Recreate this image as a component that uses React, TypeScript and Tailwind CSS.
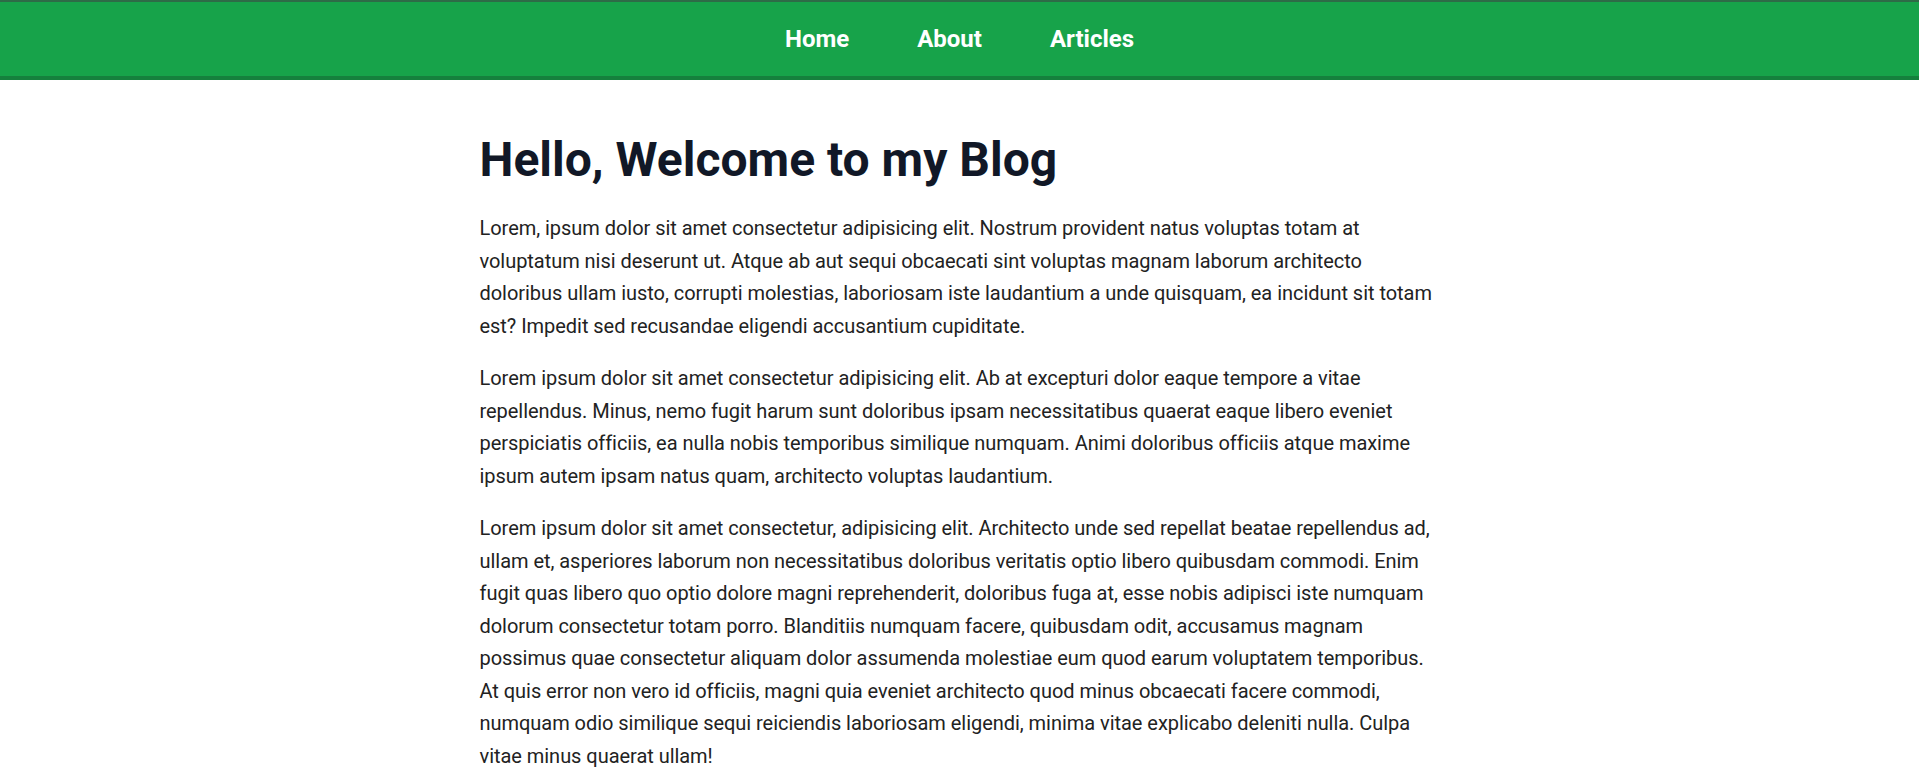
const NAV = ["Home", "About", "Articles"];

const PARAGRAPHS = [
  "Lorem, ipsum dolor sit amet consectetur adipisicing elit. Nostrum provident natus voluptas totam at voluptatum nisi deserunt ut. Atque ab aut sequi obcaecati sint voluptas magnam laborum architecto doloribus ullam iusto, corrupti molestias, laboriosam iste laudantium a unde quisquam, ea incidunt sit totam est? Impedit sed recusandae eligendi accusantium cupiditate.",
  "Lorem ipsum dolor sit amet consectetur adipisicing elit. Ab at excepturi dolor eaque tempore a vitae repellendus. Minus, nemo fugit harum sunt doloribus ipsam necessitatibus quaerat eaque libero eveniet perspiciatis officiis, ea nulla nobis temporibus similique numquam. Animi doloribus officiis atque maxime ipsum autem ipsam natus quam, architecto voluptas laudantium.",
  "Lorem ipsum dolor sit amet consectetur, adipisicing elit. Architecto unde sed repellat beatae repellendus ad, ullam et, asperiores laborum non necessitatibus doloribus veritatis optio libero quibusdam commodi. Enim fugit quas libero quo optio dolore magni reprehenderit, doloribus fuga at, esse nobis adipisci iste numquam dolorum consectetur totam porro. Blanditiis numquam facere, quibusdam odit, accusamus magnam possimus quae consectetur aliquam dolor assumenda molestiae eum quod earum voluptatem temporibus. At quis error non vero id officiis, magni quia eveniet architecto quod minus obcaecati facere commodi, numquam odio similique sequi reiciendis laboriosam eligendi, minima vitae explicabo deleniti nulla. Culpa vitae minus quaerat ullam!",
];

function Navbar() {
  return (
    <nav className="flex h-[80px] items-center justify-center gap-[68px] border-t-2 border-b-4 border-t-[#2e6b47] border-b-[#15803d] bg-[#17a34a]">
      {NAV.map((item) => (
        <a key={item} href="#" className="text-2xl font-bold text-white">
          {item}
        </a>
      ))}
    </nav>
  );
}

export default function App() {
  return (
    <div className="min-h-screen bg-white font-['Segoe_UI','Roboto',sans-serif]">
      <Navbar />
      <main className="mx-auto w-full max-w-[960px] pt-[56px] pb-12">
        <h1 className="mb-[28px] text-[48px] leading-none font-bold text-[#111827]">
          Hello, Welcome to my Blog
        </h1>
        {PARAGRAPHS.map((p, i) => (
          <p
            key={i}
            className="mb-5 text-xl leading-[32.5px] tracking-[-0.04px] text-[#222]"
          >
            {p}
          </p>
        ))}
      </main>
    </div>
  );
}
